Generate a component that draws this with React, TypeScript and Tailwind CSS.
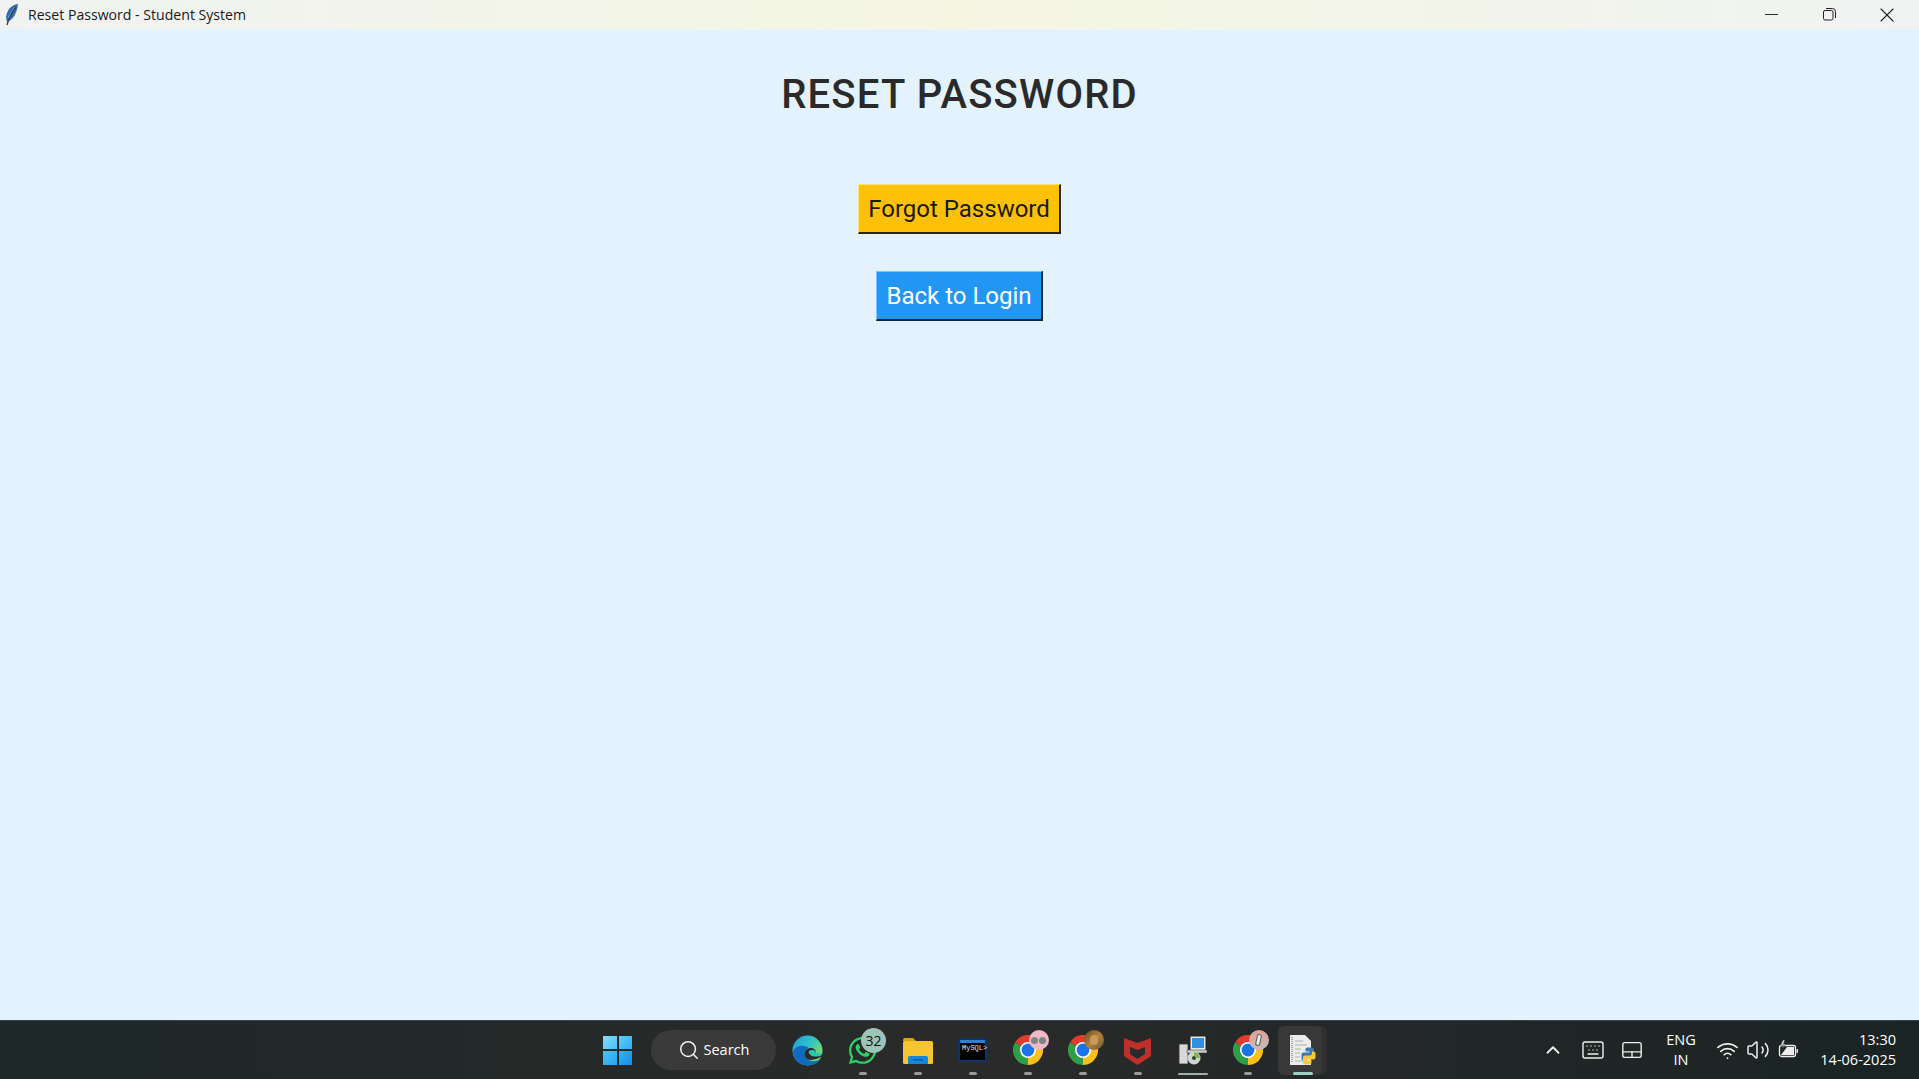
import React from 'react'
import { ChevronUp, Keyboard, Minus, Search, Touchpad, Volume2, Wifi, X } from 'lucide-react'
import { FaWhatsapp } from 'react-icons/fa'

const uiFont = "font-['Open_Sans','Noto_Sans',sans-serif]"

function Feather() {
  return (
    <svg width="16" height="24" viewBox="0 0 16 24">
      <path d="M14 1 C7 2 3 7 2 14 L3 19 C9 17 13 10 14 1 Z" fill="#2f6cb0" />
      <path d="M11 4 C8 8 6 11 4 15" stroke="#7fb0e0" strokeWidth="1" fill="none" />
      <path d="M12 4 C8 9 5 14 3 22" stroke="#3a4650" strokeWidth="1.4" fill="none" />
    </svg>
  )
}

function RestoreIcon() {
  return (
    <svg width="13" height="13" viewBox="0 0 13 13" fill="none" stroke="#222" strokeWidth="1">
      <rect x="0.5" y="2.5" width="9.5" height="9.5" rx="1.5" />
      <path d="M3 .5 h6.5 a3 3 0 0 1 3 3 V10" />
    </svg>
  )
}

function WindowsLogo() {
  return (
    <div className="grid grid-cols-2 gap-[2px] w-[29px] h-[29px]">
      <div className="bg-gradient-to-br from-[#7fdcfb] to-[#4cc0f5]" />
      <div className="bg-gradient-to-br from-[#5ccdf9] to-[#2fb0f2]" />
      <div className="bg-gradient-to-br from-[#4cc2f6] to-[#25a5ee]" />
      <div className="bg-gradient-to-br from-[#35b2f4] to-[#128ce8]" />
    </div>
  )
}

function EdgeIcon() {
  return (
    <svg width="31" height="31" viewBox="0 0 31 31">
      <defs>
        <linearGradient id="edgeTop" x1="0" y1="0" x2="1" y2="0.6">
          <stop offset="0" stopColor="#1b9de2" />
          <stop offset="0.6" stopColor="#34c6c0" />
          <stop offset="1" stopColor="#7fdc5a" />
        </linearGradient>
      </defs>
      <circle cx="15.5" cy="15.5" r="15" fill="url(#edgeTop)" />
      <path d="M1 17 C2 28 12 32 20 30 C24 29 27 27 29 24 C24 27 17 27 14 23 C11 19 13 14 17 13 C12 9 3 10 1 17 Z" fill="#0f6cbd" />
      <path d="M14 23 C11 19 13 14 18 13 C22 13 24 15 24 18 L30.5 18 L30 21 C26 24 17 27 14 23 Z" fill="#2a2a2a" />
      <path d="M17 16 C20 14 24 15 24 18 L30.5 18 C30 22 25 22 20 21 C18 20 16 18 17 16 Z" fill="#2cc6a8" />
    </svg>
  )
}

function FolderIcon() {
  return (
    <svg width="30" height="27" viewBox="0 0 30 27">
      <path d="M0 3 a2 2 0 0 1 2-2 h8 l3 3 h-13 Z" fill="#e0a106" />
      <rect x="0" y="4" width="30" height="23" rx="1.5" fill="#f7c531" />
      <path d="M5 27 v-6 a2 2 0 0 1 2-2 h16 a2 2 0 0 1 2 2 v6 Z" fill="#1487d8" />
      <rect x="10" y="22" width="10" height="1.5" fill="#0b5fa8" />
    </svg>
  )
}

function MysqlIcon() {
  return (
    <div className="w-[29px] h-[24px] bg-black border-2 border-[#12335f] rounded-[2px] flex flex-col">
      <div className="h-[3px] bg-[#2f7fd0] shrink-0" />
      <span className="font-['Liberation_Mono',monospace] text-[7px] leading-[11px] text-[#e8e8e8] pl-[2px]">MySQL&gt;</span>
    </div>
  )
}

function ChromeIcon() {
  return (
    <svg width="30" height="30" viewBox="0 0 30 30">
      <path d="M15 15 L2 7.5 A15 15 0 0 1 28 7.5 Z" fill="#e33b2e" />
      <path d="M15 15 L28 7.5 A15 15 0 0 1 15 30 Z" fill="#fbc116" />
      <path d="M15 15 L15 30 A15 15 0 0 1 2 7.5 Z" fill="#2f9e46" />
      <circle cx="15" cy="15" r="8" fill="#fff" />
      <circle cx="15" cy="15" r="6.4" fill="#1a73e8" />
    </svg>
  )
}

function McafeeIcon() {
  return (
    <svg width="27" height="29" viewBox="0 0 27 29">
      <path d="M0 2 L13.5 7 L27 2 V20 L13.5 29 L0 20 Z" fill="#c0302a" />
      <path d="M6 11 L13.5 14 L21 11 V18 L13.5 23 L6 18 Z" fill="#2a2a2a" />
    </svg>
  )
}

function InstallerIcon() {
  return (
    <svg width="30" height="30" viewBox="0 0 30 30">
      <rect x="1" y="9" width="9" height="20" fill="#d8d8d8" stroke="#333" strokeWidth="0.8" />
      <rect x="12" y="1" width="16" height="15" fill="#e8e8e8" stroke="#222" strokeWidth="1" />
      <rect x="14" y="3" width="12" height="10" fill="#2f8fe0" />
      <rect x="9" y="15" width="20" height="3" fill="#cfcfcf" stroke="#333" strokeWidth="0.5" />
      <circle cx="16" cy="23" r="6.5" fill="#cfd8c8" />
      <circle cx="16" cy="23" r="2" fill="#3a3a3a" />
      <path d="M16 17 A6 6 0 0 1 22 23 L18 23 A2 2 0 0 0 16 21 Z" fill="#86b84a" />
    </svg>
  )
}

function PythonFile() {
  const snake = 'M18 12.5 h5 a2 2 0 0 1 2 2 v5 a2 2 0 0 1 -2 2 h-5 a2 2 0 0 0 -2 2 v2 h-1.5 a2 2 0 0 1 -2 -2 v-4 a2 2 0 0 1 2 -2 h6 v-1 h-4 v-2 a2 2 0 0 1 2 -2 Z'
  return (
    <svg width="28" height="30" viewBox="0 0 28 30">
      <path d="M1 0 H16 L22 6 V30 H1 Z" fill="#ececec" />
      <path d="M3 2 V28" stroke="#a8a8a8" strokeWidth="2" strokeDasharray="1 1" />
      <path d="M6 6 H14 M6 10 H18 M6 14 H12 M6 18 H11 M6 22 H11 M6 26 H14" stroke="#c4c4c4" strokeWidth="1.5" />
      <path d={snake} fill="#3b78ab" />
      <path d={snake} fill="#f7c93e" transform="rotate(180 19.5 21)" />
    </svg>
  )
}

function BatteryIcon() {
  return (
    <svg width="22" height="22" viewBox="0 0 22 22">
      <rect x="2.5" y="6.5" width="16" height="11" rx="2" fill="none" stroke="#eee" strokeWidth="1.3" />
      <path d="M4 16 L10 8 H17 V16 Z" fill="#eee" />
      <rect x="19.5" y="10" width="1.5" height="4" rx="0.7" fill="#eee" />
      <path d="M6 1 L3.5 6 H6.5 L5 10 L9 5 H6.5 L8 1 Z" fill="#eee" stroke="#1b2624" strokeWidth="0.6" />
    </svg>
  )
}

function Badge({ className, children }: { className: string; children?: React.ReactNode }) {
  return (
    <div className={`absolute -top-[5px] -right-[6px] w-[20px] h-[20px] rounded-full flex items-center justify-center overflow-hidden ${className}`}>
      {children}
    </div>
  )
}

function TaskItem({ children, bar = 'dot' }: { children: React.ReactNode; bar?: 'dot' | 'none' | 'wide' | 'active' }) {
  return (
    <div className="relative w-[55px] h-[55px] flex items-center justify-center">
      {bar === 'active' && (
        <>
          <div className="absolute top-[3px] left-[20px] w-[32px] h-[49px] rounded-[6px] bg-[#303030]" />
          <div className="absolute top-[3px] left-[3px] w-[44px] h-[49px] rounded-[6px] bg-[#383838]" />
        </>
      )}
      <div className="relative">{children}</div>
      {bar === 'dot' && <div className="absolute bottom-[3px] left-1/2 -translate-x-1/2 w-[8px] h-[3px] rounded-full bg-[#9a9a9a]" />}
      {bar === 'wide' && <div className="absolute bottom-[3px] left-1/2 -translate-x-1/2 w-[30px] h-[2px] rounded-full bg-[#9fb0ab]" />}
      {bar === 'active' && <div className="absolute bottom-[3px] left-1/2 -translate-x-1/2 w-[20px] h-[3px] rounded-full bg-[#9fcfc4]" />}
    </div>
  )
}

export default function App() {
  return (
    <div className="w-full h-screen flex flex-col overflow-hidden bg-[#e3f2fd]">
      {/* title bar */}
      <div className={`h-[29px] shrink-0 flex items-center bg-gradient-to-r from-[#f0f3f2] via-[#f5f6e2] to-[#f0f3f2] ${uiFont}`}>
        <div className="pl-[4px] w-[28px] shrink-0">
          <Feather />
        </div>
        <span className="text-[14.1px] text-[#1a1a1a]">Reset Password - Student System</span>
        <div className="ml-auto pr-[3px] flex items-center">
          <div className="w-[58px] flex justify-center"><Minus size={21} strokeWidth={1.1} color="#222" /></div>
          <div className="w-[58px] flex justify-center"><RestoreIcon /></div>
          <div className="w-[58px] flex justify-center"><X size={24} strokeWidth={1.1} color="#222" /></div>
        </div>
      </div>

      {/* main form */}
      <main className="flex-1 flex flex-col items-center font-['Roboto',sans-serif]">
        <h1 className="mt-[42px] text-[40px] leading-[48px] font-medium tracking-[1.2px] text-[#2a2a2a]">RESET PASSWORD</h1>
        <button className="mt-[65px] w-[203px] h-[50px] pt-[1px] text-[24px] leading-none bg-[#ffc107] text-[#1a1a1a] border-t border-l border-t-[#ffe87a] border-l-[#ffe87a] border-b-2 border-r-2 border-b-[#2a2410] border-r-[#2a2410]">
          Forgot Password
        </button>
        <button className="mt-[37px] w-[167px] h-[50px] pt-[1px] text-[24px] leading-none bg-[#2196f3] text-white border-t border-l border-t-[#7cc4fb] border-l-[#7cc4fb] border-b-2 border-r-2 border-b-[#10253a] border-r-[#10253a]">
          Back to Login
        </button>
      </main>

      {/* taskbar */}
      <div className={`h-[59px] shrink-0 flex items-center pl-[590px] pr-[23px] border-t border-[#3c4349] bg-gradient-to-r from-[#1d2827] via-[#2a2a2a] via-50% to-[#1a2424] text-white ${uiFont}`}>
        <div className="w-[55px] flex justify-center"><WindowsLogo /></div>
        <div className="ml-[6px] w-[125px] h-[40px] rounded-full bg-[#3a3a3a] flex items-center justify-center gap-[4px]">
          <Search size={22} strokeWidth={1.7} color="#eee" />
          <span className="text-[14.5px]">Search</span>
        </div>
        <div className="ml-[4px] flex items-center">
          <TaskItem bar="none"><EdgeIcon /></TaskItem>
          <TaskItem>
            <FaWhatsapp size={31} color="#2ad167" />
            <div className="absolute -top-[7px] -right-[8px] w-[25px] h-[25px] rounded-full bg-[#9cc4b8] flex items-center justify-center text-[14px] text-[#111]">32</div>
          </TaskItem>
          <TaskItem><FolderIcon /></TaskItem>
          <TaskItem><MysqlIcon /></TaskItem>
          <TaskItem>
            <ChromeIcon />
            <Badge className="bg-[#f2b8c6] gap-[1px]">
              <div className="w-[7px] h-[7px] rounded-full bg-[#7a8886]" />
              <div className="w-[7px] h-[7px] rounded-full bg-[#7a8886]" />
            </Badge>
          </TaskItem>
          <TaskItem>
            <ChromeIcon />
            <Badge className="bg-gradient-to-br from-[#5e4a26] via-[#b5813a] to-[#6b5a35]">
              <div className="w-[8px] h-[10px] rounded-full bg-[#c99a55]" />
            </Badge>
          </TaskItem>
          <TaskItem><McafeeIcon /></TaskItem>
          <TaskItem bar="wide"><InstallerIcon /></TaskItem>
          <TaskItem>
            <ChromeIcon />
            <Badge className="bg-gradient-to-b from-[#e0a096] to-[#c0bcba]">
              <div className="w-[5px] h-[12px] rounded-full bg-[#e8e8e8] border border-[#555] rotate-12" />
            </Badge>
          </TaskItem>
          <TaskItem bar="active"><PythonFile /></TaskItem>
        </div>

        {/* tray */}
        <div className="ml-auto flex items-center">
          <ChevronUp size={22} strokeWidth={2} color="#eee" />
          <div className="ml-[17px]"><Keyboard size={24} strokeWidth={1.4} color="#eee" /></div>
          <div className="ml-[16px]"><Touchpad size={22} strokeWidth={1.5} color="#eee" /></div>
          <div className="ml-[16px] w-[44px] text-center text-[14.5px] leading-[20px]">
            <div>ENG</div>
            <div>IN</div>
          </div>
          <div className="ml-[13px]"><Wifi size={23} strokeWidth={1.8} color="#eee" /></div>
          <div className="ml-[7px]"><Volume2 size={24} strokeWidth={1.5} color="#eee" /></div>
          <div className="ml-[7px]"><BatteryIcon /></div>
          <div className="ml-[19px] w-[78px] text-right text-[14.5px] leading-[20px] whitespace-nowrap">
            <div>13:30</div>
            <div>14-06-2025</div>
          </div>
        </div>
      </div>
    </div>
  )
}
